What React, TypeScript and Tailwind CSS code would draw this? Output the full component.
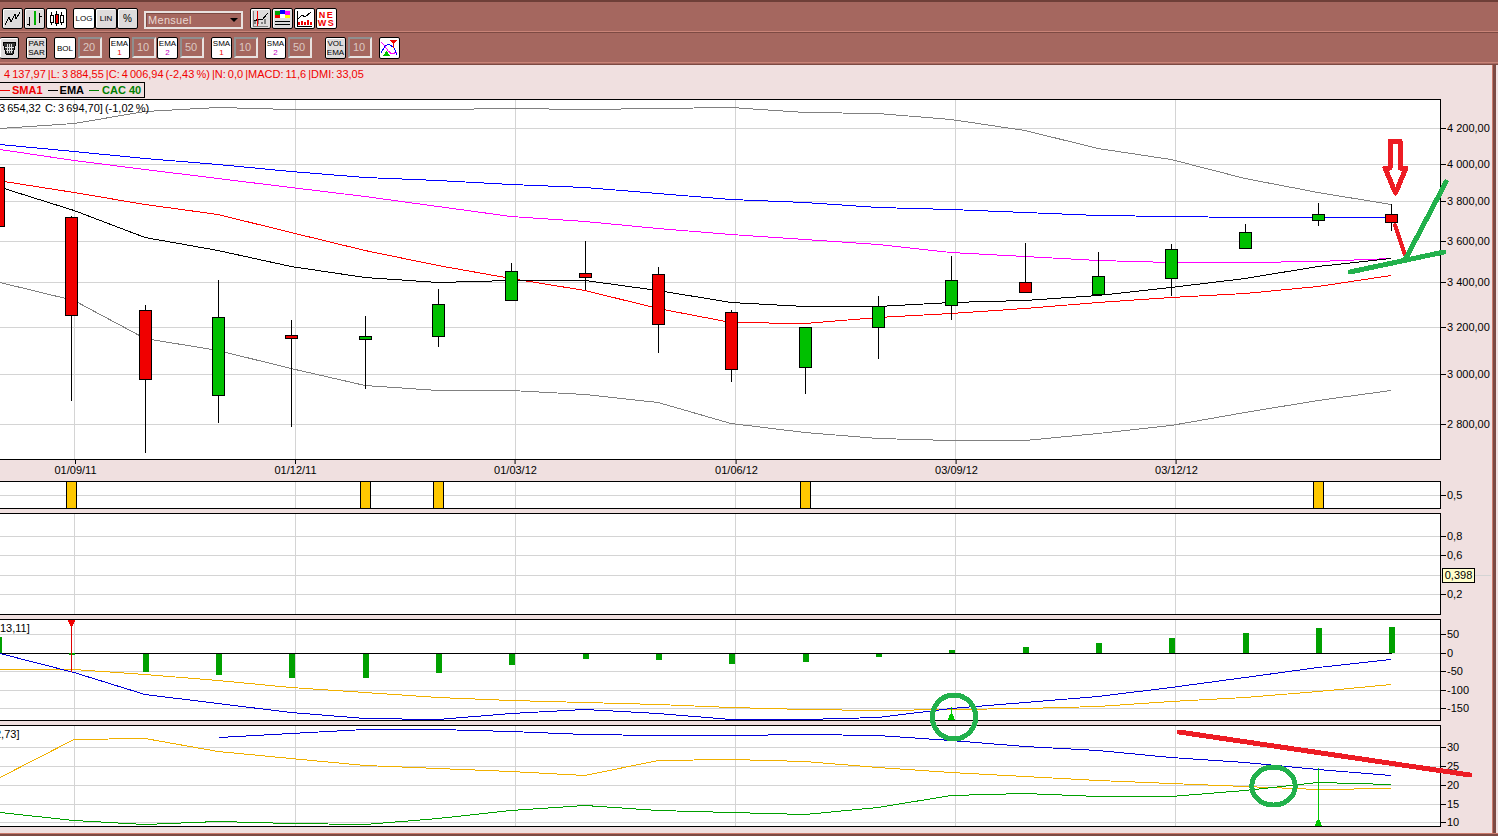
import type { ReactNode } from "react";

type Pt = [number, number];

const SANS = "font-['Liberation_Sans',Arial,sans-serif]";

const VGRID = [74, 295, 515, 735, 955, 1175];
const DATES = [
  { x: 75, label: "01/09/11" },
  { x: 295, label: "01/12/11" },
  { x: 515, label: "01/03/12" },
  { x: 736, label: "01/06/12" },
  { x: 956, label: "03/09/12" },
  { x: 1176, label: "03/12/12" },
];

// x positions of the monthly bars, shared by every series below
const XS = [74, 145, 218, 291, 365, 438, 511, 585, 658, 731, 805, 878, 951, 1025, 1098, 1171, 1245, 1318, 1391];
const series = (first: Pt, ys: number[]): Pt[] => [first, ...ys.map((y, i): Pt => [XS[i], y])];

const CANDLES = [
  { x: -2, top: 167, bot: 226, hi: 160, lo: 230, up: false },
  { x: 71, top: 217, bot: 315, hi: 216, lo: 401, up: false },
  { x: 145, top: 310, bot: 379, hi: 305, lo: 453, up: false },
  { x: 218, top: 317, bot: 395, hi: 280, lo: 423, up: true },
  { x: 291, top: 335, bot: 338, hi: 320, lo: 427, up: false },
  { x: 365, top: 336, bot: 339, hi: 316, lo: 389, up: true },
  { x: 438, top: 304, bot: 336, hi: 289, lo: 347, up: true },
  { x: 511, top: 271, bot: 300, hi: 263, lo: 300, up: true },
  { x: 585, top: 273, bot: 277, hi: 241, lo: 290, up: false },
  { x: 658, top: 274, bot: 324, hi: 267, lo: 353, up: false },
  { x: 731, top: 312, bot: 369, hi: 310, lo: 382, up: false },
  { x: 805, top: 327, bot: 367, hi: 327, lo: 394, up: true },
  { x: 878, top: 306, bot: 327, hi: 296, lo: 359, up: true },
  { x: 951, top: 280, bot: 305, hi: 256, lo: 320, up: true },
  { x: 1025, top: 282, bot: 292, hi: 243, lo: 292, up: false },
  { x: 1098, top: 276, bot: 294, hi: 252, lo: 294, up: true },
  { x: 1171, top: 249, bot: 278, hi: 244, lo: 296, up: true },
  { x: 1245, top: 232, bot: 248, hi: 224, lo: 249, up: true },
  { x: 1318, top: 214, bot: 220, hi: 203, lo: 226, up: true },
  { x: 1391, top: 214, bot: 222, hi: 204, lo: 231, up: false },
];

const MAIN_LINES: { color: string; pts: Pt[] }[] = [
  {
    color: "#808080",
    pts: series([0, 128], [123, 111, 107, 109, 109, 109, 108, 109, 108, 107, 112, 113, 119, 130, 148, 159, 178, 192, 204]),
  },
  {
    color: "#0000ff",
    pts: series([0, 144], [151, 158, 164, 171, 177, 180, 184, 187, 193, 199, 202, 207, 209, 212, 215, 216, 217, 217, 217]),
  },
  {
    color: "#ff00ff",
    pts: series([0, 149], [160, 169, 178, 187, 196, 206, 216, 221, 228, 234, 239, 244, 252, 256, 260, 262, 262, 261, 258]),
  },
  {
    color: "#ff0000",
    pts: series([4, 181], [192, 204, 214, 232, 250, 265, 278, 290, 308, 322, 323, 317, 313, 308, 302, 297, 293, 286, 275]),
  },
  {
    color: "#000000",
    pts: series([4, 188], [210, 237, 250, 266, 277, 282, 280, 280, 290, 302, 306, 306, 302, 300, 295, 287, 278, 266, 258]),
  },
  {
    color: "#808080",
    pts: series([0, 282], [300, 338, 350, 368, 385, 390, 390, 394, 402, 423, 432, 438, 440, 440, 433, 425, 412, 400, 390]),
  },
];

const HIST = [
  { x: 143, y: 654, h: 18 },
  { x: 216, y: 654, h: 21 },
  { x: 289, y: 654, h: 24 },
  { x: 363, y: 654, h: 24 },
  { x: 436, y: 654, h: 19 },
  { x: 509, y: 654, h: 11 },
  { x: 583, y: 654, h: 5 },
  { x: 656, y: 654, h: 6 },
  { x: 729, y: 654, h: 10 },
  { x: 803, y: 654, h: 8 },
  { x: 876, y: 654, h: 3 },
  { x: 949, y: 650, h: 3 },
  { x: 1023, y: 647, h: 6 },
  { x: 1096, y: 643, h: 10 },
  { x: 1169, y: 638, h: 15 },
  { x: 1243, y: 633, h: 20 },
  { x: 1316, y: 628, h: 25 },
  { x: 1389, y: 627, h: 26 },
  { x: 0, y: 637, h: 16 },
  { x: 69, y: 653, h: 2 },
];

const MACD_BLUE = series([0, 653], [672, 694, 703, 712, 718, 719, 713, 709, 713, 719, 719, 717, 708, 702, 696, 687, 677, 667, 659]);
const MACD_ORANGE = series([0, 669], [669, 674, 680, 687, 692, 697, 700, 702, 704, 707, 709, 710, 709, 708, 706, 701, 697, 691, 684]);

const DMI_BLUE: Pt[] = [
  [219, 737], [291, 733], [365, 729], [438, 729], [511, 731], [585, 734], [658, 735], [731, 735], [805, 734],
  [878, 735], [951, 740], [1025, 746], [1098, 750], [1171, 757], [1245, 762], [1318, 769], [1391, 775],
];
const DMI_ORANGE = series([0, 777], [739, 738, 751, 758, 765, 768, 771, 775, 760, 759, 761, 767, 772, 776, 780, 783, 786, 789, 788]);
const DMI_GREEN = series([0, 812], [820, 824, 821, 823, 824, 818, 810, 805, 810, 812, 814, 807, 795, 793, 796, 796, 790, 782, 784]);

function Line({ pts, color }: { pts: Pt[]; color: string }) {
  // half-pixel offset: with crispEdges a flat stretch on a whole y draws nothing
  return (
    <polyline
      points={pts.map(([x, y]) => `${x},${y + 0.5}`).join(" ")}
      fill="none"
      stroke={color}
      strokeWidth="1"
    />
  );
}

function Grid({ ys, top, bottom }: { ys: number[]; top: number; bottom: number }) {
  return (
    <g stroke="#d4d4d4" strokeWidth="1">
      {ys.map((y) => (
        <line key={y} x1="0" x2="1440" y1={y + 0.5} y2={y + 0.5} />
      ))}
      {VGRID.map((x) => (
        <line key={x} x1={x + 0.5} x2={x + 0.5} y1={top} y2={bottom} />
      ))}
    </g>
  );
}

function Panel({
  top,
  height,
  ticks,
  children,
  extra,
  label,
}: {
  top: number;
  height: number;
  ticks: { y: number; label: string }[];
  children: ReactNode;
  extra?: ReactNode;
  label?: ReactNode;
}) {
  const inner = height - 2;
  return (
    <div className="flex" style={{ height }}>
      <div className="relative w-[1441px] overflow-hidden border-y border-r border-black bg-white">
        <svg
          width="1440"
          height={inner}
          viewBox={`0 ${top + 1} 1440 ${inner}`}
          shapeRendering="crispEdges"
          className="block"
        >
          {children}
        </svg>
        {label}
      </div>
      <div className="relative flex-1">
        {ticks.map((t) => (
          <div
            key={t.label}
            className="absolute left-0 flex items-center text-[11px] leading-[14px] text-black"
            style={{ top: t.y - top - 7 }}
          >
            <span className="mr-[1px] h-px w-[5px] bg-black" />
            <span className="whitespace-nowrap">{t.label}</span>
          </div>
        ))}
        {extra}
      </div>
    </div>
  );
}

function Btn({ active, className, children }: { active?: boolean; className: string; children: ReactNode }) {
  return (
    <div
      className={`flex shrink-0 items-center justify-center rounded-[2px] border border-black text-[8px] leading-[9px] text-black shadow-[inset_1px_1px_0_#ffffff] ${
        active ? "bg-white" : "bg-[#dedbdb]"
      } ${className}`}
    >
      {children}
    </div>
  );
}

function NumInput({ value, className }: { value: string; className: string }) {
  return (
    <div
      className={`flex h-[21px] w-[24px] shrink-0 items-center border-2 border-t-[#8f8f8f] border-r-[#e9e2e0] border-b-[#e9e2e0] border-l-[#8f8f8f] bg-[#a5675f] pl-[3px] text-[11px] text-[#dcc8c2] ${className}`}
    >
      {value}
    </div>
  );
}

function TwoLine({ a, b, color }: { a: string; b: string; color?: string }) {
  return (
    <div className="flex flex-col items-center">
      <span>{a}</span>
      <span className={color ?? "text-black"}>{b}</span>
    </div>
  );
}

function Toolbar() {
  return (
    <header className="h-[65px] shrink-0 border-t-2 border-t-[#6e3f38] bg-[#a5675f]">
      <div className="flex h-[29px] items-start pl-[2px] pt-[6px]">
        <Btn className="h-[21px] w-[21px]">
          <svg width="17" height="15" viewBox="0 0 17 15" fill="none" stroke="#000" shapeRendering="crispEdges">
            <path d="M1 14L5 6L7 11L11 3L12 8L16 1" />
          </svg>
        </Btn>
        <Btn className="ml-[1px] h-[21px] w-[21px]">
          <svg width="17" height="17" viewBox="0 0 17 17" shapeRendering="crispEdges">
            <path d="M3.5 7V16M1 14H3.5M13.5 3V13M13.5 6H16" stroke="#000" fill="none" />
            <path d="M8.5 1V15" stroke="#00b000" strokeWidth="2" fill="none" />
          </svg>
        </Btn>
        <Btn active className="ml-[1px] h-[21px] w-[21px]">
          <svg width="17" height="17" viewBox="0 0 17 17" shapeRendering="crispEdges">
            <path d="M3.5 2V15M13.5 2V15M8.5 1V16" stroke="#000" fill="none" />
            <rect x="2" y="5" width="3" height="7" fill="#fff" stroke="#000" />
            <rect x="7" y="4" width="3" height="9" fill="#f00000" stroke="#000" />
            <rect x="12" y="5" width="3" height="7" fill="#fff" stroke="#000" />
          </svg>
        </Btn>
        <Btn active className="ml-[6px] h-[21px] w-[22px]">LOG</Btn>
        <Btn className="h-[21px] w-[22px]">LIN</Btn>
        <Btn className="h-[21px] w-[21px] text-[10px]">%</Btn>
        <div className="relative ml-[6px] mt-[3px] flex h-[18px] w-[99px] items-center border-2 border-[#e9e2e0] pl-[2px] text-[11px] tracking-[0.3px] text-[#e8d8d2] shadow-[inset_1px_1px_0_#7d4a43]">
          Mensuel
          <span className="absolute right-[3px] top-[5px] h-0 w-0 border-x-[4px] border-t-[4px] border-x-transparent border-t-black" />
        </div>
        <Btn className="ml-[7px] h-[21px] w-[21px]">
          <svg width="17" height="17" viewBox="0 0 17 17" shapeRendering="crispEdges">
            <path d="M1 16H16M1 1V16" stroke="#808080" fill="none" />
            <path d="M3 14V11M6 14V10M10 14V12M13 14V9" stroke="#808080" strokeWidth="2" fill="none" />
            <path d="M2 11L7 9L10 10L16 3" stroke="#000" fill="none" />
            <path d="M5.5 1V16" stroke="#f00000" fill="none" />
          </svg>
        </Btn>
        <Btn className="ml-[1px] h-[21px] w-[21px]">
          <svg width="17" height="17" viewBox="0 0 17 17" shapeRendering="crispEdges">
            <rect x="1" y="1" width="5" height="4" fill="#00a000" />
            <rect x="6" y="0" width="5" height="4" fill="#0000ff" />
            <rect x="11" y="1" width="5" height="4" fill="#ff00ff" />
            <rect x="1" y="5" width="5" height="3" fill="#f00000" />
            <rect x="6" y="4" width="5" height="4" fill="#ffffff" />
            <rect x="11" y="5" width="5" height="3" fill="#ffff00" />
            <path d="M1 11H16V12H1ZM1 14H16V15H1Z" fill="#000" />
          </svg>
        </Btn>
        <Btn className="ml-[1px] h-[21px] w-[21px]" active>
          <svg width="17" height="17" viewBox="0 0 17 17" shapeRendering="crispEdges">
            <path d="M1 1V16H16" stroke="#000" fill="none" />
            <path d="M2 9L6 5L9 7L15 2" stroke="#000" fill="none" />
            <path d="M3 15V12M6 15V11M9 15V12M12 15V10M15 15V12" stroke="#f00000" strokeWidth="2" fill="none" />
          </svg>
        </Btn>
        <Btn active className="ml-[1px] h-[21px] w-[21px]">
          <div className="flex flex-col items-center text-[9px] font-bold leading-[8px] tracking-[1.5px] text-[#f00000]">
            <span>NE</span>
            <span>WS</span>
          </div>
        </Btn>
      </div>
      <div className="h-[2px] border-t border-b border-t-[#c98478] border-b-[#7d4a43]" />
      <div className="flex h-[29px] items-start pt-[4px]">
        <Btn className="h-[22px] w-[19px] border-l-0">
          <svg width="15" height="16" viewBox="0 0 15 16" shapeRendering="crispEdges">
            <path d="M1 2H14L11 14H4Z" fill="#333" stroke="#000" />
            <path d="M5 4L6 13M7.5 4V13M10 4L9 13M3 7H12M4 10H11" stroke="#ddd" fill="none" />
          </svg>
        </Btn>
        <Btn className="ml-[7px] h-[22px] w-[21px]">
          <TwoLine a="PAR" b="SAR" />
        </Btn>
        <Btn active className="ml-[7px] h-[22px] w-[22px]">BOL</Btn>
        <NumInput value="20" className="ml-[2px]" />
        <Btn active className="ml-[7px] h-[22px] w-[21px]">
          <TwoLine a="EMA" b="1" color="text-[#f00000]" />
        </Btn>
        <NumInput value="10" className="ml-[2px]" />
        <Btn active className="ml-[1px] h-[22px] w-[21px]">
          <TwoLine a="EMA" b="2" color="text-[#c000c0]" />
        </Btn>
        <NumInput value="50" className="ml-[2px]" />
        <Btn active className="ml-[7px] h-[22px] w-[21px]">
          <TwoLine a="SMA" b="1" color="text-[#f00000]" />
        </Btn>
        <NumInput value="10" className="ml-[2px]" />
        <Btn active className="ml-[7px] h-[22px] w-[21px]">
          <TwoLine a="SMA" b="2" color="text-[#c000c0]" />
        </Btn>
        <NumInput value="50" className="ml-[2px]" />
        <Btn className="ml-[13px] h-[22px] w-[21px]">
          <TwoLine a="VOL" b="EMA" />
        </Btn>
        <NumInput value="10" className="ml-[2px]" />
        <Btn active className="ml-[7px] h-[22px] w-[21px]">
          <svg width="19" height="19" viewBox="0 0 19 19" shapeRendering="crispEdges">
            <path d="M1 3L5 7L8 12L12 15L17 13" stroke="#ff00ff" fill="none" />
            <path d="M1 14L5 7L9 5L14 9L17 16" stroke="#0000ff" fill="none" />
            <path d="M10 1H17L13.5 5Z" fill="#f00000" />
            <path d="M13 5V9" stroke="#f00000" fill="none" />
            <path d="M3 17H10L6.5 12Z" fill="#00c000" />
          </svg>
        </Btn>
      </div>
      <div className="h-[3px] border-t border-b border-t-[#c98478] border-b-[#7d4a43]" />
    </header>
  );
}

function Annotations() {
  return (
    <svg
      width="1498"
      height="836"
      shapeRendering="crispEdges"
      className="pointer-events-none absolute left-0 top-0"
      fill="none"
      strokeLinecap="round"
      strokeLinejoin="round"
    >
      <path d="M1390 141H1400V168H1406L1395.5 193L1385 168H1390Z" stroke="#ed1c24" strokeWidth="5" />
      <path d="M1395 225L1405 255" stroke="#ed1c24" strokeWidth="4" />
      <path d="M1350 272L1444 252" stroke="#22b14c" strokeWidth="5" />
      <path d="M1406 258L1446 182" stroke="#22b14c" strokeWidth="5" />
      <path d="M1179 732L1470 775" stroke="#ed1c24" strokeWidth="5" />
      <ellipse cx="954" cy="717" rx="21.7" ry="22" stroke="#22b14c" strokeWidth="5" />
      <ellipse cx="1273.5" cy="786" rx="21.7" ry="19" stroke="#22b14c" strokeWidth="5" />
    </svg>
  );
}

export default function App() {
  return (
    <div className={`relative flex h-[836px] w-[1498px] flex-col overflow-hidden bg-[#f0e0e0] ${SANS}`}>
      <Toolbar />
      <div className="flex min-h-0 flex-1">
        <main className="w-[1492px]">
          <div className="h-[17px] whitespace-pre pl-[4px] pt-[2px] text-[11px] leading-[15px] text-[#f00000] [word-spacing:-1px]">
            4 137,97 |L: 3 884,55 |C: 4 006,94 (-2,43 %) |N: 0,0 |MACD: 11,6 |DMI: 33,05
          </div>
          <div className="mb-px flex h-[16px] w-[145px] items-center border-y border-r border-black text-[11px] font-bold">
            <span className="h-px w-[10px] bg-[#f00000]" />
            <span className="ml-[2px] text-[#f00000]">SMA1</span>
            <span className="ml-[5px] h-px w-[10px] bg-black" />
            <span className="ml-[2px] text-black">EMA</span>
            <span className="ml-[5px] h-px w-[10px] bg-[#008000]" />
            <span className="ml-[3px] text-[#008000]">CAC 40</span>
          </div>

          <Panel
            top={99}
            height={361}
            ticks={[
              { y: 128, label: "4 200,00" },
              { y: 164, label: "4 000,00" },
              { y: 201, label: "3 800,00" },
              { y: 241, label: "3 600,00" },
              { y: 282, label: "3 400,00" },
              { y: 327, label: "3 200,00" },
              { y: 374, label: "3 000,00" },
              { y: 424, label: "2 800,00" },
            ]}
            label={
              <div className="absolute left-[-1px] top-[1px] whitespace-pre text-[11px] leading-[14px] text-black [word-spacing:-1px]">
                3 654,32  C: 3 694,70] (-1,02 %)
              </div>
            }
          >
            <Grid ys={[128, 164, 201, 241, 282, 327, 374, 424]} top={100} bottom={459} />
            {MAIN_LINES.map((l, i) => (
              <Line key={i} pts={l.pts} color={l.color} />
            ))}
            {CANDLES.map((c) => (
              <g key={c.x}>
                <line x1={c.x + 0.5} x2={c.x + 0.5} y1={c.hi} y2={c.lo} stroke="#000" />
                <rect
                  x={c.x - 5.5}
                  y={c.top + 0.5}
                  width="12"
                  height={c.bot - c.top}
                  fill={c.up ? "#00c000" : "#f00000"}
                  stroke="#000"
                />
              </g>
            ))}
          </Panel>

          <div className="relative h-[21px]">
            {DATES.map((d) => (
              <div key={d.x} className="absolute top-0 flex -translate-x-1/2 flex-col items-center" style={{ left: d.x + 0.5 }}>
                <span className="h-[4px] w-px bg-black" />
                <span className="text-[11px] leading-[13px] text-black">{d.label}</span>
              </div>
            ))}
          </div>

          <Panel top={481} height={28} ticks={[{ y: 495, label: "0,5" }]}>
            <Grid ys={[495]} top={482} bottom={508} />
            {[66, 360, 433, 800, 1313].map((x) => (
              <rect key={x} x={x + 0.5} y="481.5" width="10" height="27" fill="#ffc800" stroke="#000" />
            ))}
          </Panel>

          <div className="h-[4px]" />

          <Panel
            top={513}
            height={102}
            ticks={[
              { y: 536, label: "0,8" },
              { y: 555, label: "0,6" },
              { y: 594, label: "0,2" },
            ]}
            extra={
              <>
                <div className="absolute left-0 top-[62px] h-px w-[50px] bg-[#d4d4d4]" />
                <div className="absolute left-[1px] top-[55px] flex h-[15px] w-[33px] items-center justify-center border border-black bg-[#ffffcc] text-[11px] leading-none text-black">
                  0,398
                </div>
              </>
            }
          >
            <Grid ys={[536, 555, 575, 594]} top={514} bottom={614} />
          </Panel>

          <div className="h-[4px]" />

          <Panel
            top={619}
            height={102}
            ticks={[
              { y: 634, label: "50" },
              { y: 653, label: "0" },
              { y: 671, label: "-50" },
              { y: 690, label: "-100" },
              { y: 708, label: "-150" },
            ]}
            label={
              <div className="absolute left-0 top-[1px] text-[11px] leading-[14px] text-black">13,11]</div>
            }
          >
            <Grid ys={[634, 653, 671, 690, 708]} top={620} bottom={720} />
            <line x1="0" x2="1392" y1="653.5" y2="653.5" stroke="#000" />
            {HIST.map((b) => (
              <rect key={b.x} x={b.x} y={b.y} width={b.x === 0 ? 2 : 6} height={b.h} fill="#00a000" />
            ))}
            <Line pts={MACD_ORANGE} color="#f0b000" />
            <Line pts={MACD_BLUE} color="#0000d8" />
            <line x1="71.5" x2="71.5" y1="620" y2="672" stroke="#e00000" />
            <path d="M68 620H75V622H74V624H73V626H70V624H69V622H68Z" fill="#f00000" />
            <line x1="951.5" x2="951.5" y1="707" y2="720" stroke="#00c800" />
            <path d="M948 720H955L953 714H950Z" fill="#00c800" />
          </Panel>

          <div className="h-[4px]" />

          <Panel
            top={725}
            height={102}
            ticks={[
              { y: 747, label: "30" },
              { y: 766, label: "25" },
              { y: 785, label: "20" },
              { y: 804, label: "15" },
              { y: 822, label: "10" },
            ]}
            label={
              <div className="absolute left-[-5px] top-[1px] text-[11px] leading-[14px] text-black">2,73]</div>
            }
          >
            <Grid ys={[747, 766, 785, 804, 822]} top={726} bottom={826} />
            <Line pts={DMI_ORANGE} color="#f0b000" />
            <Line pts={DMI_GREEN} color="#00a000" />
            <Line pts={DMI_BLUE} color="#0000d8" />
            <line x1="1318.5" x2="1318.5" y1="768" y2="826" stroke="#00c800" />
            <path d="M1315 826H1322L1320 820H1317Z" fill="#00c800" />
          </Panel>
        </main>
        <div className="w-[6px] border-l border-r-2 border-l-[#c9796b] border-r-[#f0e0e0] bg-[#7d4a43]" />
      </div>
      <div className="h-[3px] shrink-0 border-t border-t-[#c9796b] bg-[#7d4a43]" />
      <Annotations />
    </div>
  );
}
